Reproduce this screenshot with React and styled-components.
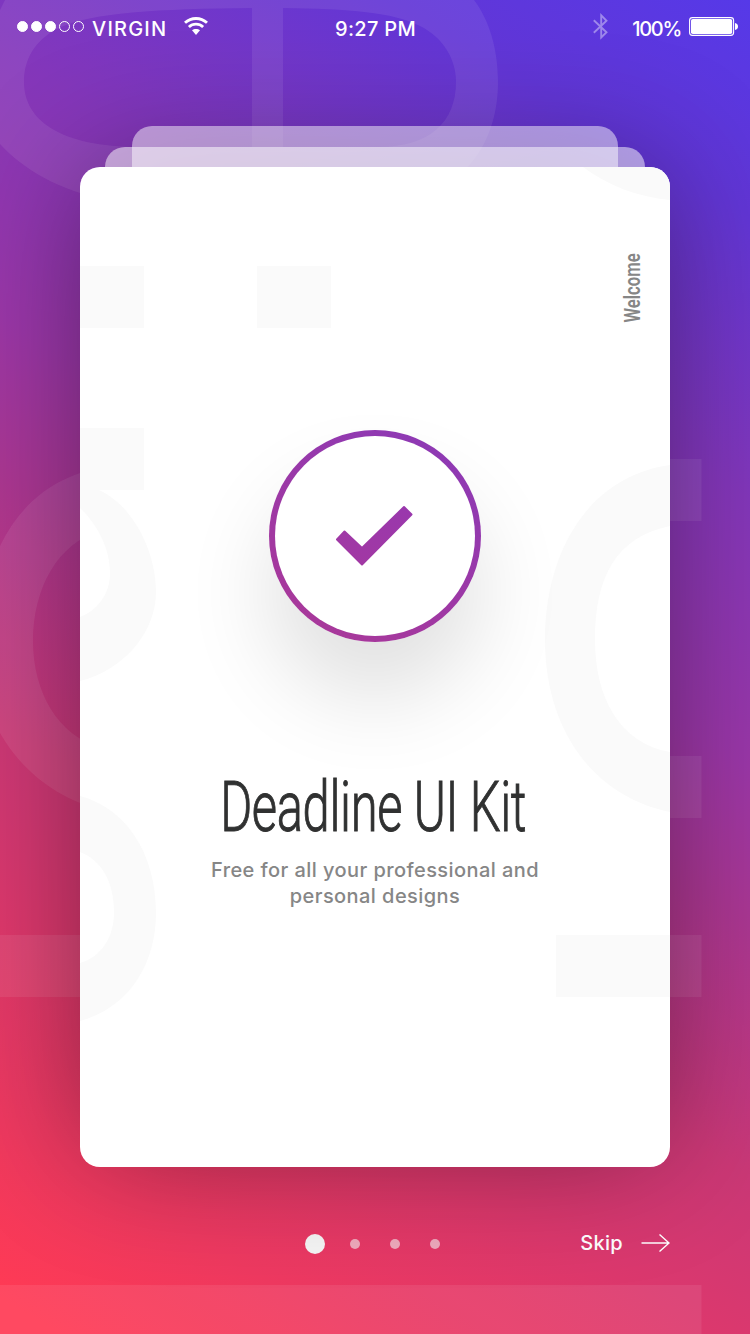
import React from "react";
import styled, { createGlobalStyle } from "styled-components";

const GlobalStyle = createGlobalStyle`
  body { margin: 0; }
  *, *::before, *::after { box-sizing: border-box; }
`;

const sunset = `linear-gradient(211deg,
  #5639e8 0%, #6236d6 12%, #8437bb 28%, #9b37a8 43%,
  #ac3792 52%, #cb3876 66%, #dc386d 76%, #ee3960 88%, #ff3a54 98%)`;

const Screen = styled.main`
  position: relative;
  isolation: isolate;
  display: flex;
  flex-direction: column;
  width: 750px;
  height: 1334px;
  overflow: hidden;
  background: ${sunset};
  color: #fff;
  font-family: Inter, "Liberation Sans", sans-serif;
  font-weight: 500;
`;

const Pattern = styled.svg`
  position: absolute;
  inset: 0;
  z-index: -1;
`;

const StatusBar = styled.header`
  display: grid;
  grid-template-columns: 1fr auto 1fr;
  align-items: center;
  height: 58px;
  padding: 0 12px 0 17px;
  font-size: 20px;
  line-height: 24px;
`;

const StatusGroup = styled.div`
  display: flex;
  align-items: center;
  justify-content: ${(p) => (p.$end ? "flex-end" : "flex-start")};
`;

const StatusText = styled.span`
  letter-spacing: ${(p) => p.$tracking || "0"};
  margin-left: ${(p) => p.$gap || 0}px;
`;

const Clock = styled(StatusText)`
  margin-right: 4px;
`;

const Signal = styled.div`
  display: flex;
  gap: 3px;
  margin-top: -5px;
`;

const SignalDot = styled.i`
  width: 11px;
  height: 11px;
  border: 1px solid #fff;
  border-radius: 50%;
  background: ${(p) => (p.$on ? "#fff" : "transparent")};
`;

const Glyph = styled.svg`
  flex: none;
  display: block;
  margin-left: ${(p) => p.$gap || 0}px;
  margin-top: ${(p) => p.$lift || 0}px;
`;

const Deck = styled.section`
  position: relative;
  isolation: isolate;
  width: 590px;
  height: 1000px;
  margin: 109px auto 0;
`;

const Sheet = styled.div`
  position: absolute;
  z-index: 1;
  top: -${(p) => p.$peek}px;
  left: ${(p) => p.$inset}px;
  right: ${(p) => p.$inset}px;
  height: ${(p) => p.$peek}px;
  border-radius: 20px 20px 0 0;
  background: rgba(255, 255, 255, ${(p) => p.$alpha});
`;

const Card = styled.article`
  position: relative;
  isolation: isolate;
  display: flex;
  flex-direction: column;
  align-items: center;
  height: 100%;
  overflow: hidden;
  border-radius: 20px;
  background: #fff;
`;

const DeckShadow = styled.div`
  position: absolute;
  inset: 0;
  z-index: -1;
  border-radius: 20px;
  box-shadow: 0 -8px 130px -14px rgba(0, 0, 0, 0.46);
`;

const Label = styled.div`
  display: flex;
  align-self: flex-end;
  align-items: center;
  justify-content: center;
  width: 24px;
  height: 70px;
  margin: 86px 26px 0 0;
`;

const LabelText = styled.span`
  font: 600 22.5px/24px Roboto, sans-serif;
  color: #868686;
  white-space: nowrap;
  transform: rotate(-90deg) scaleX(0.74);
`;

const Badge = styled.div`
  display: flex;
  align-items: center;
  justify-content: center;
  flex: none;
  width: 212px;
  height: 212px;
  margin-top: 107px;
  padding-right: 2px;
  border: 6px solid transparent;
  border-radius: 50%;
  background:
    linear-gradient(#fff, #fff) padding-box,
    linear-gradient(211deg, #8a39b8, #ac3896) border-box;
  box-shadow: 0 56px 88px rgba(0, 0, 0, 0.12);
`;

const Title = styled.h1`
  margin: 123px 0 0 -3px;
  font: 300 70px/84px Roboto, sans-serif;
  letter-spacing: -0.5px;
  color: #303131;
  -webkit-text-stroke: 1px #303131;
  white-space: nowrap;
  transform: scaleX(0.698);
`;

const Subtitle = styled.p`
  width: 350px;
  margin: 8px 0 0;
  font-size: 20px;
  line-height: 26px;
  letter-spacing: 0.43px;
  text-align: center;
  color: #868686;
`;

const Footer = styled.footer`
  display: flex;
  align-items: center;
  justify-content: space-between;
  height: 154px;
  padding: 0 80px 0 305px;
`;

const Pager = styled.div`
  display: flex;
  align-items: center;
  gap: 30px;
`;

const PageDot = styled.i`
  width: ${(p) => (p.$active ? 20 : 10)}px;
  height: ${(p) => (p.$active ? 20 : 10)}px;
  margin-right: ${(p) => (p.$active ? -5 : 0)}px;
  border-radius: 50%;
  background: ${(p) => (p.$active ? "#f5f5f5" : "rgba(245,245,245,.6)")};
`;

const Skip = styled.button`
  display: flex;
  align-items: center;
  gap: 18px;
  padding: 0 0 3px;
  border: 0;
  background: none;
  color: inherit;
  font: 500 20px/24px Inter, sans-serif;
  letter-spacing: 0.3px;
`;

const Backdrop = () => (
  <Pattern width="750" height="1334" viewBox="0 0 750 1334" fill="#fff" fillOpacity=".08">
    <path
      fillRule="evenodd"
      d="M5 0H474C489 20 498 48 498 82C498 138 468 200 380 200H110C60 192 22 168 0 144V10Z
         M252 8C160 9 90 12 57 29C34 41 24 60 24 82C24 120 60 147 140 147H252Z
         M283 8V147H378C430 147 456 122 456 82C456 60 444 38 420 26C392 12 350 9 283 8Z"
    />
    <path
      fillRule="evenodd"
      d="M100 468C55 476 20 504 0 546V733C22 772 60 800 100 809Z
         M100 531C58 543 33 588 33 641C33 692 58 736 100 747Z"
    />
    <path d="M0 935H90V997H0Z M660 459H701.5V521H660Z M660 756H701.5V818H660Z M660 935H701.5V997H660Z M0 1285H701.5V1334H0Z" />
  </Pattern>
);

const CardPattern = () => (
  <Pattern width="590" height="1000" viewBox="80 167 590 1000" fill="#fafafa">
    <path d="M80 266H144V328H80Z M257 266H331V328H257Z M556 935H670V997H556Z" />
    <path d="M583 167C607 185 637 197 670 200V167Z" />
    <path d="M80 428H144V490H99C132 505 156 550 156 592C156 632 124 670 80 681V617C98 610 110 594 110 573C110 548 97 524 80 508Z" />
    <path d="M80 796C125 808 156 852 156 913C156 965 128 1008 80 1021V963C101 957 114 938 114 912C114 881 101 860 80 852Z" />
    <path d="M670 465C590 476 545 550 545 640C545 728 592 796 670 812V752C619 743 595 697 595 640C595 577 616 537 670 526Z" />
  </Pattern>
);

export default function App() {
  return (
    <>
      <GlobalStyle />
      <Screen>
        <Backdrop />
        <StatusBar>
          <StatusGroup>
            <Signal>
              {[1, 1, 1, 0, 0].map((on, i) => (
                <SignalDot key={i} $on={on} />
              ))}
            </Signal>
            <StatusText $gap={8} $tracking="1.2px">VIRGIN</StatusText>
            <Glyph $gap={17} $lift={-6} width="24" height="18" viewBox="0 0 24 18" fill="none" stroke="#fff">
              <path d="M1 5.8C7.3 0 16.7 0 23 5.8" strokeWidth="2.9" />
              <path d="M4.9 10C9 6.2 15 6.2 19.1 10" strokeWidth="2.8" />
              <path d="M8 13.3C10.3 11.4 13.7 11.4 16 13.3L12 17.9Z" fill="#fff" stroke="none" />
            </Glyph>
          </StatusGroup>
          <Clock $tracking="0.3px">9:27 PM</Clock>
          <StatusGroup $end>
            <Glyph $lift={-5} width="15" height="27" viewBox="0 0 15 27" fill="none" stroke="#fff" strokeOpacity=".4" strokeWidth="1.9">
              <path d="M.8 7.2L13.5 19.2L8.2 24.4V2.4L13.5 7.8L.8 19.8" />
            </Glyph>
            <StatusText $gap={24} $tracking="-1.3px">100%</StatusText>
            <Glyph $gap={8} $lift={-5} width="49" height="19" viewBox="0 0 49 19">
              <rect x=".6" y=".6" width="44" height="17.8" rx="2.8" fill="none" stroke="#fff" strokeWidth="1.1" />
              <rect x="2" y="2" width="41.2" height="15" rx="1.8" fill="#fff" />
              <path d="M46 6C50 6.8 50 12.2 46 13Z" fill="#fff" />
            </Glyph>
          </StatusGroup>
        </StatusBar>

        <Deck>
          <DeckShadow />
          <Sheet $peek={41} $inset={52} $alpha={0.48} />
          <Sheet $peek={20} $inset={25} $alpha={0.5} />
          <Card>
            <CardPattern />
            <Label>
              <LabelText>Welcome</LabelText>
            </Label>
            <Badge>
              <svg width="78" height="62" viewBox="0 0 78 62">
                <defs>
                  <linearGradient id="tick" x1="1" y1="0" x2="0.4" y2="1">
                    <stop offset="0" stopColor="#9938ad" />
                    <stop offset="1" stopColor="#a138a4" />
                  </linearGradient>
                </defs>
                <path
                  d="M2 34.5L9.5 26.5L27 43L69 2L76.5 9.5L27 59.5Z"
                  fill="url(#tick)"
                  stroke="url(#tick)"
                  strokeWidth="2"
                  strokeLinejoin="round"
                />
              </svg>
            </Badge>
            <Title>Deadline UI Kit</Title>
            <Subtitle>
              Free for all your professional and personal designs
            </Subtitle>
          </Card>
        </Deck>

        <Footer>
          <Pager>
            <PageDot $active />
            <PageDot />
            <PageDot />
            <PageDot />
          </Pager>
          <Skip>
            Skip
            <svg width="29" height="18" viewBox="0 0 29 18" fill="none" stroke="#fff" strokeWidth="1.4">
              <path d="M.5 9H28M18.5.5L28 9L18.5 17.5" />
            </svg>
          </Skip>
        </Footer>
      </Screen>
    </>
  );
}
